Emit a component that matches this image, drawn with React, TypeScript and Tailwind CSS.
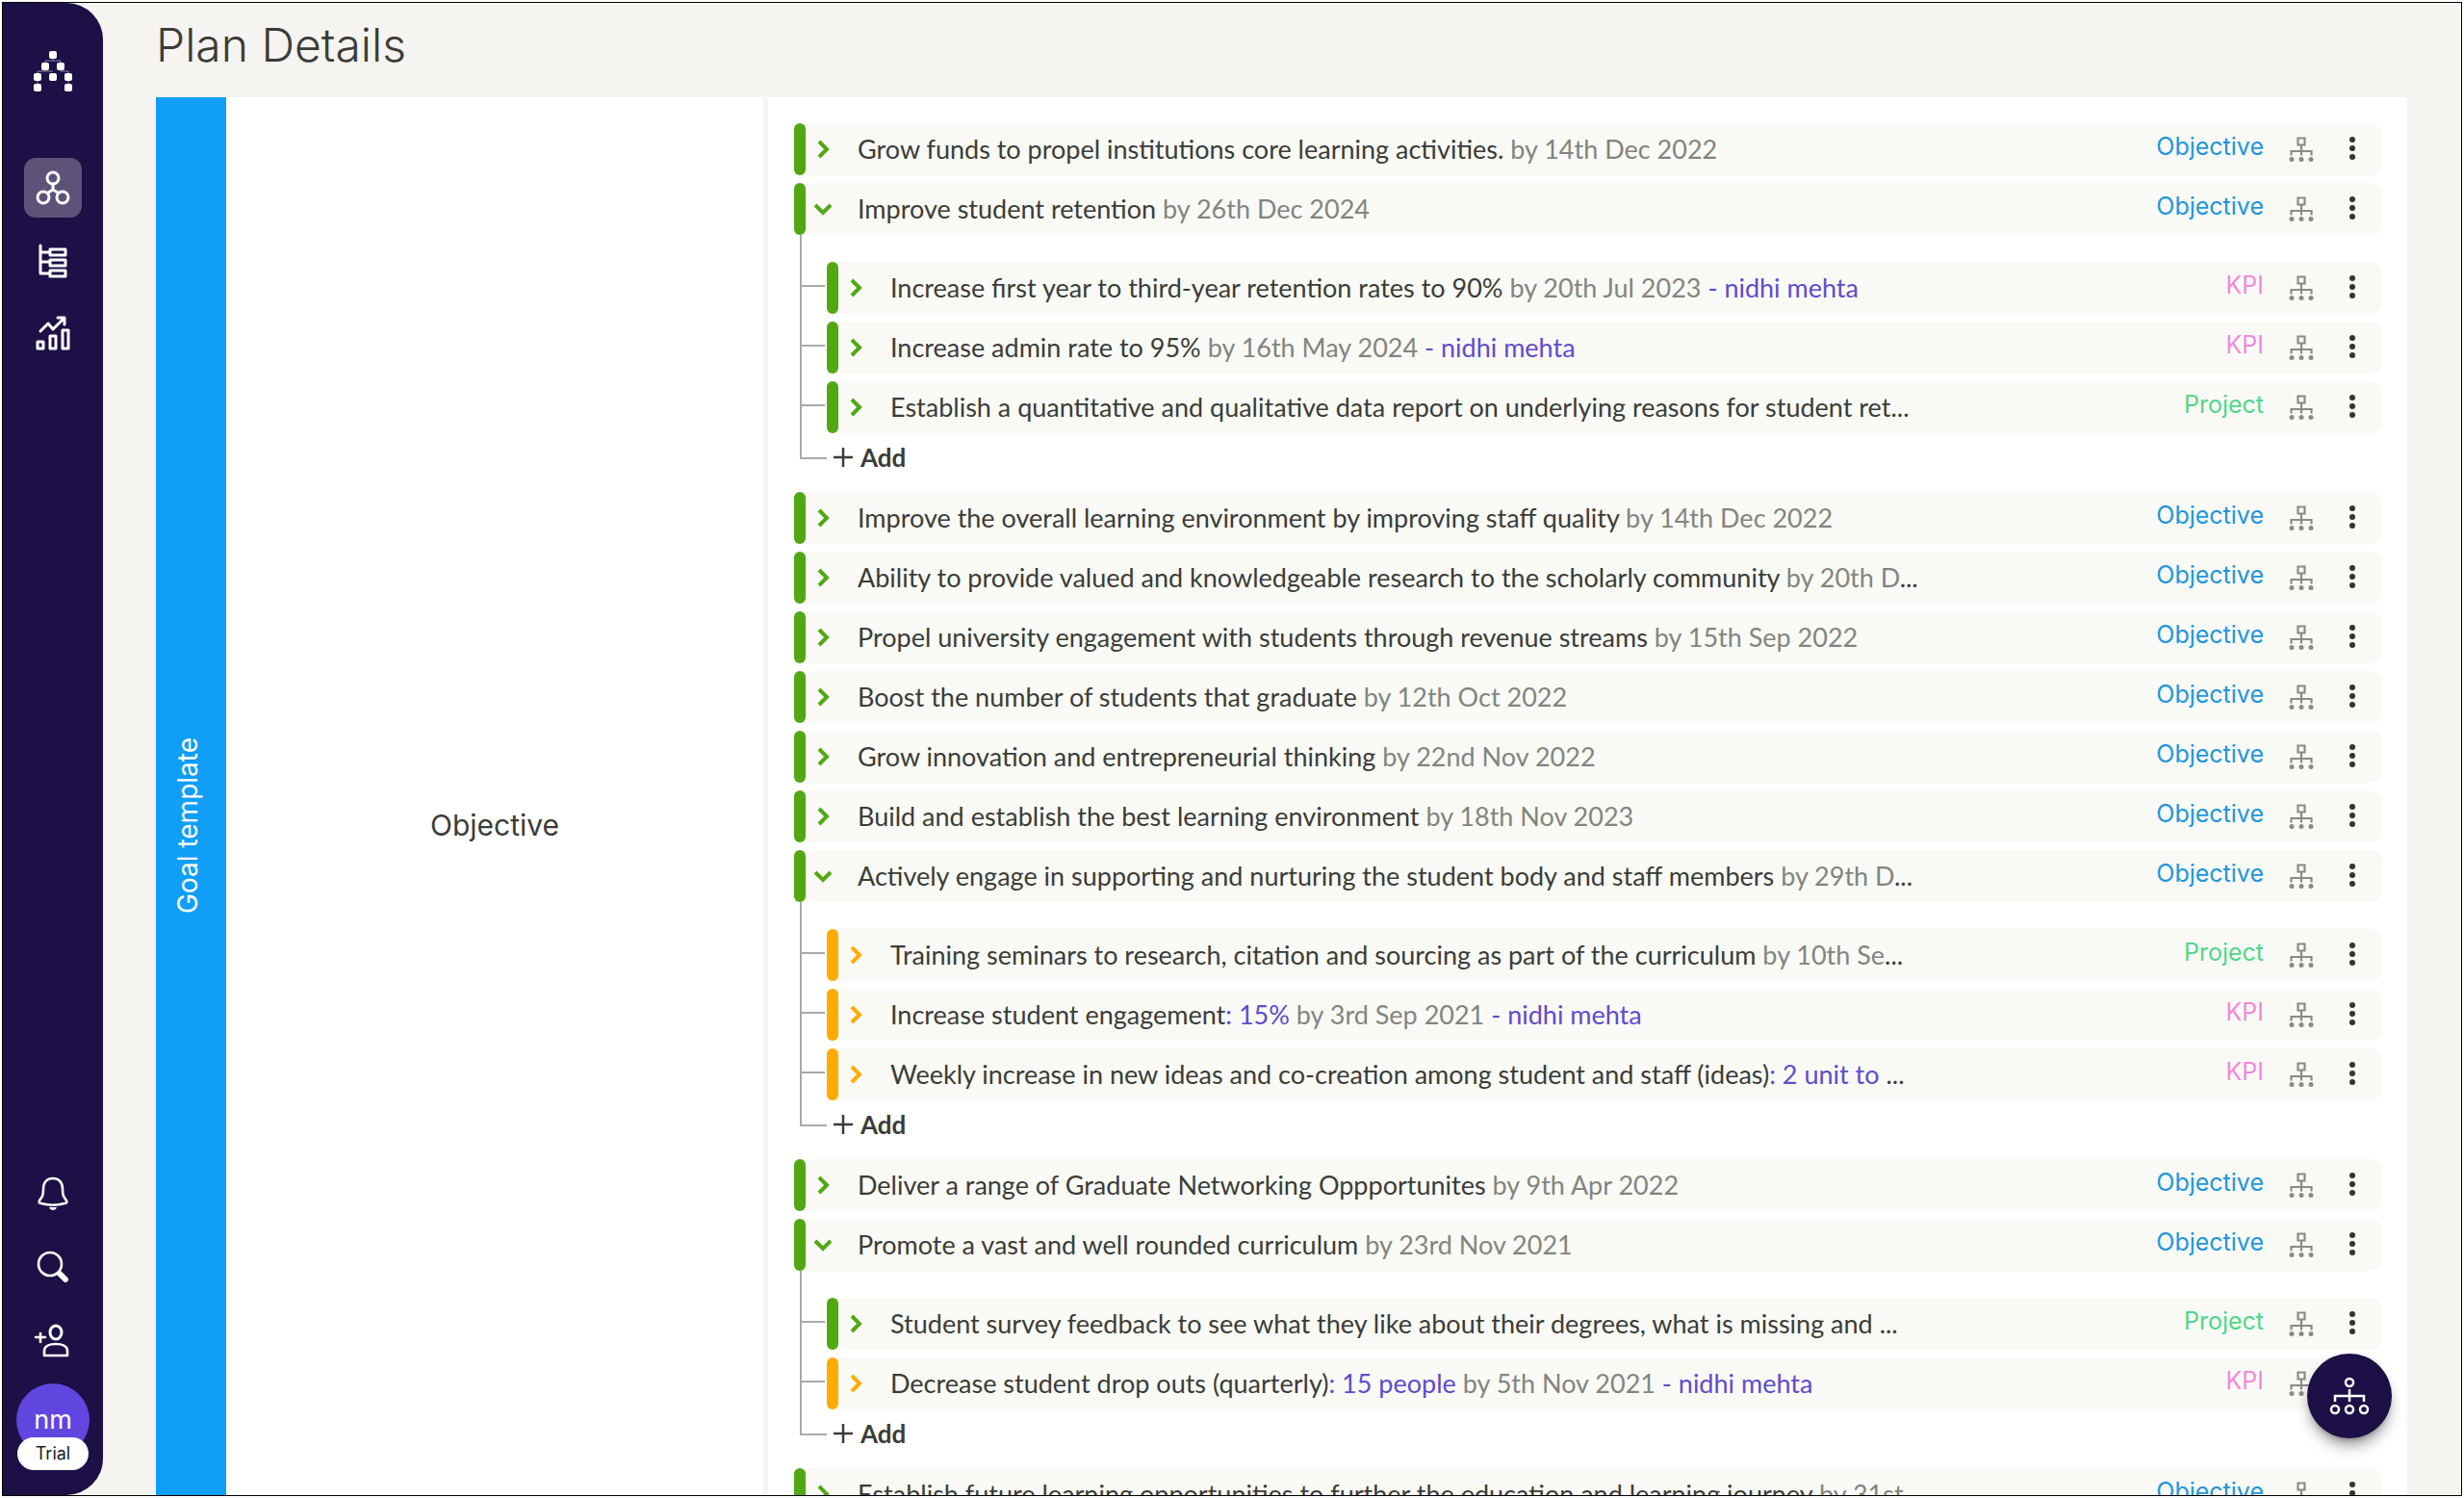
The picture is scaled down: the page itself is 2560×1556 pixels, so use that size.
import React from "react";
import clsx from "clsx";

type Kind = "Objective" | "KPI" | "Project";

interface Goal {
  title: string;
  value?: string;
  date?: string;
  owner?: string;
  cut?: boolean;
  kind: Kind;
  color?: "green" | "orange";
  children?: Goal[];
}

const goals: Goal[] = [
  { title: "Grow funds to propel institutions core learning activities.", date: "by 14th Dec 2022", kind: "Objective" },
  {
    title: "Improve student retention",
    date: "by 26th Dec 2024",
    kind: "Objective",
    children: [
      { title: "Increase first year to third-year retention rates to 90%", date: "by 20th Jul 2023", owner: "nidhi mehta", kind: "KPI" },
      { title: "Increase admin rate to 95%", date: "by 16th May 2024", owner: "nidhi mehta", kind: "KPI" },
      { title: "Establish a quantitative and qualitative data report on underlying reasons for student ret", cut: true, kind: "Project" },
    ],
  },
  { title: "Improve the overall learning environment by improving staff quality", date: "by 14th Dec 2022", kind: "Objective" },
  { title: "Ability to provide valued and knowledgeable research to the scholarly community", date: "by 20th D", cut: true, kind: "Objective" },
  { title: "Propel university engagement with students through revenue streams", date: "by 15th Sep 2022", kind: "Objective" },
  { title: "Boost the number of students that graduate", date: "by 12th Oct 2022", kind: "Objective" },
  { title: "Grow innovation and entrepreneurial thinking", date: "by 22nd Nov 2022", kind: "Objective" },
  { title: "Build and establish the best learning environment", date: "by 18th Nov 2023", kind: "Objective" },
  {
    title: "Actively engage in supporting and nurturing the student body and staff members",
    date: "by 29th D",
    cut: true,
    kind: "Objective",
    children: [
      { title: "Training seminars to research, citation and sourcing as part of the curriculum", date: "by 10th Se", cut: true, kind: "Project", color: "orange" },
      { title: "Increase student engagement", value: "15%", date: "by 3rd Sep 2021", owner: "nidhi mehta", kind: "KPI", color: "orange" },
      { title: "Weekly increase in new ideas and co-creation among student and staff (ideas)", value: "2 unit to ", cut: true, kind: "KPI", color: "orange" },
    ],
  },
  { title: "Deliver a range of Graduate Networking Oppportunites", date: "by 9th Apr 2022", kind: "Objective" },
  {
    title: "Promote a vast and well rounded curriculum",
    date: "by 23rd Nov 2021",
    kind: "Objective",
    children: [
      { title: "Student survey feedback to see what they like about their degrees, what is missing and ", cut: true, kind: "Project" },
      { title: "Decrease student drop outs (quarterly)", value: "15 people", date: "by 5th Nov 2021", owner: "nidhi mehta", kind: "KPI", color: "orange" },
    ],
  },
  { title: "Establish future learning opportunities to further the education and learning journey", date: "by 31st", cut: true, kind: "Objective" },
];

const kindColor: Record<Kind, string> = {
  Objective: "text-[#2196dc]",
  KPI: "text-[#f288dc]",
  Project: "text-[#52d68a]",
};

function Chevron({ open, color }: { open?: boolean; color: string }) {
  return (
    <svg width="20" height="20" viewBox="0 0 20 20" fill="none" stroke={color} strokeWidth="4">
      {open ? <path d="M2 6l8 8 8-8" /> : <path d="M6 2l8 8-8 8" />}
    </svg>
  );
}

function TreeIcon() {
  return (
    <svg width="26" height="28" viewBox="0 0 26 28" fill="none" stroke="#8a8a88" strokeWidth="2.2">
      <path d="M9.5 2.5h7v7h-7zM13 9.5v11M2.5 20.5v-4.500h21v4.500" />
      <g fill="#8a8a88" stroke="none">
        <circle cx="3" cy="24.500" r="2.500" />
        <circle cx="13" cy="24.500" r="2.500" />
        <circle cx="23" cy="24.500" r="2.500" />
      </g>
    </svg>
  );
}

function Dots() {
  return (
    <svg width="8" height="26" viewBox="0 0 8 26" fill="#33332f">
      <circle cx="4" cy="4" r="3" />
      <circle cx="4" cy="13" r="3" />
      <circle cx="4" cy="22" r="3" />
    </svg>
  );
}

function GoalRow({ goal }: { goal: Goal }) {
  const orange = goal.color === "orange";
  return (
    <div className="flex h-[54px] items-center rounded-xl bg-[#f9faf6]">
      <div className={clsx("h-full w-3 shrink-0 rounded-full", orange ? "bg-[#ffab00]" : "bg-[#52a812]")} />
      <button aria-label="Toggle goal" className="ml-2 shrink-0">
        <Chevron open={!!goal.children} color={orange ? "#ffab00" : "#52a812"} />
      </button>
      <p className="ml-[26px] min-w-0 flex-1 whitespace-nowrap text-[27px] leading-8 text-[#3b3c38]">
        {goal.title}
        {goal.value && <span className="text-[#5f4bd0]">: {goal.value}</span>}
        {goal.date && <span className="text-[#83847f]"> {goal.date}</span>}
        {goal.owner && <span className="text-[#5f4bd0]"> - {goal.owner}</span>}
        {goal.cut && "..."}
      </p>
      <span className={clsx("shrink-0 pb-1 font-['Inter',sans-serif] text-[25px]", kindColor[goal.kind])}>{goal.kind}</span>
      <button aria-label="Show in tree" className="ml-[26px] shrink-0">
        <TreeIcon />
      </button>
      <button aria-label="More options" className="mr-[27px] ml-9 shrink-0 pb-0.5">
        <Dots />
      </button>
    </div>
  );
}

function GoalGroup({ goal }: { goal: Goal }) {
  return (
    <li>
      <GoalRow goal={goal} />
      {goal.children && (
        <div className="ml-1.5">
          <ul className="flex flex-col border-l-2 border-[#a9aaa6] pt-7">
            {goal.children.map((child) => (
              <li key={child.title} className="mb-2 flex items-start">
                <span className="mt-6 mr-0.5 w-6 shrink-0 border-t-2 border-[#a9aaa6]" />
                <div className="min-w-0 flex-1">
                  <GoalRow goal={child} />
                </div>
              </li>
            ))}
          </ul>
          <div className="flex h-[45px]">
            <span className="h-[19px] w-7 border-b-2 border-l-2 border-[#a9aaa6]" />
            <button className="flex h-[34px] items-center gap-2 pl-[7px] text-[26px] font-bold text-[#3b3c38]">
              <svg width="20" height="20" viewBox="0 0 20 20" fill="none" stroke="currentColor" strokeWidth="2.500">
                <path d="M10 0v20M0 10h20" />
              </svg>
              Add
            </button>
          </div>
        </div>
      )}
    </li>
  );
}

function NavButton({ label, active, children }: { label: string; active?: boolean; children: React.ReactNode }) {
  return (
    <button aria-label={label} className={clsx("flex h-[62px] w-[60px] items-center justify-center rounded-xl", active && "bg-[#5d5379]")}>
      <svg width="42" height="42" viewBox="0 0 42 42" fill="none" stroke="white" strokeWidth="3" strokeLinecap="round" strokeLinejoin="round">
        {children}
      </svg>
    </button>
  );
}

function Sidebar() {
  return (
    <nav className="flex w-[104px] shrink-0 flex-col items-center rounded-r-[38px] bg-[#1c1046]">
      <svg className="mt-[49px]" width="42" height="44" viewBox="0 0 42 44" fill="white">
        <path d="M21 4v7M13 15v-4h16v4M13 15v7M5 38V22h16M29 18v4h8v16" fill="none" stroke="#8d86a6" strokeWidth="1" />
        <rect x="17" y="1" width="8" height="8" rx="2" />
        <rect x="9" y="13" width="8" height="8" rx="2" />
        <rect x="25" y="13" width="8" height="8" rx="2" />
        <rect x="1" y="24" width="8" height="8" rx="2" />
        <rect x="17" y="24" width="8" height="8" rx="2" />
        <rect x="33" y="24" width="8" height="8" rx="2" />
        <rect x="1" y="35" width="8" height="8" rx="2" />
        <rect x="33" y="35" width="8" height="8" rx="2" />
      </svg>
      <div className="mt-[68px] flex flex-col gap-[14px]">
        <NavButton label="Goals" active>
          <circle cx="21" cy="11" r="6" />
          <circle cx="11" cy="31" r="6" />
          <circle cx="31" cy="31" r="6" />
          <path d="M21 17v6M16 26l5-3 5 3" />
        </NavButton>
        <NavButton label="Hierarchy">
          <path d="M8 5v29h9M8 12h9M8 22h9" />
          <path d="M18 9h16v6H18zM18 20h16v6H18zM18 31h16v6H18z" />
        </NavButton>
        <NavButton label="Reports">
          <path d="M8 18l8-8 5 6 11-11M26 4h7v7" />
          <path d="M5 29h6v7H5zM18 23h6v13h-6zM31 17h6v19h-6z" />
        </NavButton>
      </div>
      <div className="mt-auto flex flex-col gap-[14px]">
        <NavButton label="Notifications">
          <path d="M21 4c-6 0-10 4-10 11 0 7-1 8-4 12-1 2 0 3 2 3 7 2 17 2 24 0 2 0 3-1 2-3-3-4-4-5-4-12 0-7-4-11-10-11z" strokeWidth="2.600" />
          <path d="M17 34h8c-1 4-7 4-8 0z" fill="white" stroke="none" />
        </NavButton>
        <NavButton label="Search">
          <circle cx="18" cy="17" r="12" strokeWidth="2.600" />
          <path d="M28 27l6 6" strokeWidth="6" />
        </NavButton>
        <NavButton label="Invite">
          <ellipse cx="24" cy="12" rx="6" ry="7" />
          <path d="M12 36v-5c0-5 6-7 12-7s12 2 12 7v5zM8 13v9M3 17h10" strokeWidth="2.600" />
        </NavButton>
      </div>
      <div className="mt-[13px] mb-[26px] flex flex-col items-center">
        <button className="h-[76px] w-[76px] rounded-full bg-[#6246e0] font-['Inter',sans-serif] text-[27px] text-white">nm</button>
        <span className="z-10 -mt-5 rounded-full bg-white px-[19px] py-1 font-['Inter',sans-serif] text-lg leading-[26px] text-[#1c1c1c]">Trial</span>
      </div>
    </nav>
  );
}

export default function App() {
  return (
    <div className="h-screen overflow-hidden bg-white p-0.5 font-['Lato',sans-serif]">
      <div className="relative flex h-full overflow-hidden border border-black bg-[#f5f4f0]">
        <Sidebar />
        <main className="flex min-w-0 flex-1 flex-col pr-14 pl-[55px]">
          <h1 className="flex h-[98px] shrink-0 items-center pb-2.5 font-['Inter',sans-serif] text-5xl font-light text-[#3b3c38]">Plan Details</h1>
          <div className="flex min-h-0 flex-1">
            <div className="flex w-[73px] shrink-0 items-center justify-center bg-[#0f9ff8] pt-[60px] pr-2">
              <span className="rotate-180 font-['Inter',sans-serif] text-[28px] text-white [writing-mode:vertical-rl]">Goal template</span>
            </div>
            <div className="mr-[5px] flex w-[558px] shrink-0 items-center justify-center bg-white pt-[60px] font-['Inter',sans-serif] text-[30px] text-[#3b3c38]">Objective</div>
            <ul className="flex min-w-0 flex-1 flex-col gap-2 bg-white pt-[27px] pr-[26px] pl-[27px]">
              {goals.map((goal) => (
                <GoalGroup key={goal.title} goal={goal} />
              ))}
            </ul>
          </div>
        </main>
        <button aria-label="Open tree view" className="absolute right-[72px] bottom-[59px] flex h-[88px] w-[88px] items-center justify-center rounded-full bg-[#1c1046] shadow-lg shadow-black/40">
          <svg width="42" height="42" viewBox="0 0 42 42" fill="none" stroke="white" strokeWidth="2.500">
            <circle cx="21" cy="7" r="4" />
            <path d="M21 14v13M6 27v-6h30v6" />
            <circle cx="6" cy="35" r="4" />
            <circle cx="21" cy="35" r="4" />
            <circle cx="36" cy="35" r="4" />
          </svg>
        </button>
      </div>
    </div>
  );
}
